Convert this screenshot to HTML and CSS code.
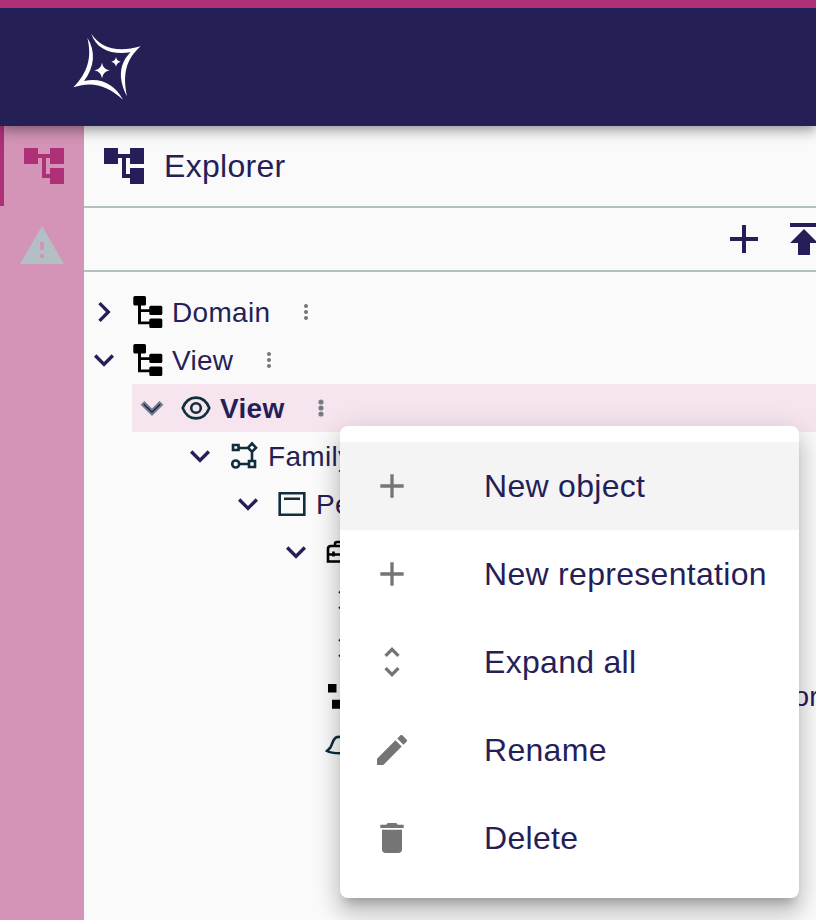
FILE: index.html
```html
<!DOCTYPE html>
<html lang="en">
<head>
<meta charset="utf-8">
<title>Explorer</title>
<link rel="stylesheet" href="styles.css">
</head>
<body>
<svg class="defs" aria-hidden="true">
  <symbol id="account-tree" viewBox="0 0 24 24"><path d="M22 11V3h-7v3H9V3H2v8h7V8h2v10h4v3h7v-8h-7v3h-2V8h2v3z"/></symbol>
  <symbol id="warning" viewBox="0 0 24 24"><path d="M1 21h22L12 2 1 21zm12-3h-2v-2h2v2zm0-4h-2v-4h2v4z"/></symbol>
  <symbol id="add" viewBox="0 0 24 24"><path d="M19 13h-6v6h-2v-6H5v-2h6V5h2v6h6v2z"/></symbol>
  <symbol id="publish" viewBox="0 0 24 24"><path d="M5 4v2h14V4H5zm0 10h4v6h6v-6h4l-7-7-7 7z"/></symbol>
  <symbol id="more" viewBox="0 0 24 24"><path d="M12 8c1.100 0 2-.9 2-2s-.9-2-2-2-2 .9-2 2 .9 2 2 2zm0 2c-1.100 0-2 .9-2 2s.9 2 2 2 2-.9 2-2-.9-2-2-2zm0 6c-1.100 0-2 .9-2 2s.9 2 2 2 2-.9 2-2-.9-2-2-2z"/></symbol>
  <symbol id="down" viewBox="0 0 24 24"><path d="M16.590 8.590 12 13.170 7.410 8.590 6 10l6 6 6-6z"/></symbol>
  <symbol id="right" viewBox="0 0 24 24"><path d="M10 6 8.590 7.410 13.170 12l-4.580 4.590L10 18l6-6z"/></symbol>
  <symbol id="unfold" viewBox="0 0 24 24"><path d="M12 5.830 15.170 9l1.410-1.410L12 3 7.410 7.590 8.830 9 12 5.830zm0 12.340L8.830 15l-1.410 1.410L12 21l4.590-4.590L15.170 15 12 18.170z"/></symbol>
  <symbol id="edit" viewBox="0 0 24 24"><path d="M3 17.250V21h3.750L17.810 9.940l-3.750-3.750L3 17.250zM20.710 7.040c.39-.39.39-1.020 0-1.410l-2.340-2.340c-.39-.39-1.020-.39-1.410 0l-1.830 1.830 3.750 3.750 1.830-1.830z"/></symbol>
  <symbol id="delete" viewBox="0 0 24 24"><path d="M6 19c0 1.100.9 2 2 2h8c1.100 0 2-.9 2-2V7H6v12zM19 4h-3.500l-1-1h-5l-1 1H5v2h14V4z"/></symbol>
  <symbol id="document" viewBox="0 0 32 32"><g><rect x="1.300" y="0" width="12.700" height="9.500" rx="1.500"/><rect x="17.300" y="9.800" width="13" height="9.200" rx="1.500"/><rect x="17.300" y="22.600" width="13" height="9.400" rx="1.500"/><path d="M6 8h3v5.200h9v2.700H9v9.600h9v2.700H6z"/></g></symbol>
</svg>

<header class="navbar">
  <svg class="logo" viewBox="0 0 300 270">
    <path d="M94 41C121 83 170 99 242 79C196 120 188 165 201 229C173 175 178 130 212 97C157 106 108 88 94 41Z"/>
    <path d="M82 53C107 92 105 140 72 183C125 172 164 194 189 239C143 197 97 182 40 202C82 158 97 115 82 53Z"/>
    <path d="M126 128Q129 147 149 151Q129 155 126 175Q123 155 103 151Q123 147 126 128ZM168 111Q170 123 182 125Q170 128 168 140Q166 128 154 125Q166 123 168 111Z"/>
  </svg>
</header>

<main class="workbench">
  <nav class="sidebar">
    <div class="tab active"><svg class="icon48"><use href="#account-tree"/></svg></div>
    <div class="tab"><svg class="icon48"><use href="#warning"/></svg></div>
  </nav>
  <section class="explorer">
    <div class="panel-title"><svg class="icon48"><use href="#account-tree"/></svg><h1>Explorer</h1></div>
    <div class="toolbar"><svg class="icon48"><use href="#add"/></svg><svg class="icon48"><use href="#publish"/></svg></div>
    <div class="tree">
      <div class="row"><svg class="toggle"><use href="#right"/></svg><svg class="kind"><use href="#document"/></svg><span class="label">Domain</span><svg class="more"><use href="#more"/></svg></div>
      <div class="row"><svg class="toggle"><use href="#down"/></svg><svg class="kind"><use href="#document"/></svg><span class="label">View</span><svg class="more"><use href="#more"/></svg></div>
      <div class="row level1 selected"><svg class="toggle"><use href="#down"/></svg>
        <svg class="kind outline" viewBox="0 0 32 32"><path d="M2.700 16C8 2.200 24 2.200 29.300 16C24 29.800 8 29.800 2.700 16Z"/><circle cx="16" cy="16" r="4.800"/></svg>
        <span class="label">View</span><svg class="more"><use href="#more"/></svg></div>
      <div class="row level2"><svg class="toggle"><use href="#down"/></svg>
        <svg class="kind outline" viewBox="0 0 32 32"><path d="M5 5h5.500v5H5zM21 21h6v6h-6zM24 3.500 28 7.700l-4 4.200-4-4.200zM10.500 8h10M24 12v9M11 24h10"/><circle cx="7.700" cy="24" r="3.500"/></svg>
        <span class="label">Family</span></div>
      <div class="row level3"><svg class="toggle"><use href="#down"/></svg>
        <svg class="kind outline" viewBox="0 0 32 32"><path d="M3.700 5.300h24.600v21.500H3.700zM8 10.700h16"/></svg>
        <span class="label">Person</span></div>
      <div class="row level4"><svg class="toggle"><use href="#down"/></svg>
        <svg class="kind tools" viewBox="0 0 32 32"><path d="M4 13q0-3 3-3h18q3 0 3 3v12.500H4zM11 10V8q0-2 2-2h7v4M4 18.500h24M9.500 15.500v5"/></svg>
        <span class="label">Tools</span></div>
      <div class="row level5"><svg class="toggle"><use href="#right"/></svg></div>
      <div class="row level5"><svg class="toggle"><use href="#right"/></svg></div>
      <div class="row level4 leaf">
        <svg class="kind" viewBox="0 0 32 32"><path d="M4 4h8.500v8.500H4zM8 19.700h9v9H8zM20 10h9v9h-9z"/></svg>
        <span class="label trailing">Representation Editor</span></div>
      <div class="row level4 leaf">
        <svg class="kind outline" viewBox="0 0 32 32"><path d="M16 9C8 8 9 17 6 20L3 23C8 26 23 26 29 23C24 20 25 9 16 9Z"/></svg></div>
    </div>
  </section>
</main>

<div class="menu">
  <div class="item hovered"><svg><use href="#add"/></svg><span>New object</span></div>
  <div class="item"><svg><use href="#add"/></svg><span>New representation</span></div>
  <div class="item"><svg><use href="#unfold"/></svg><span>Expand all</span></div>
  <div class="item"><svg><use href="#edit"/></svg><span>Rename</span></div>
  <div class="item"><svg><use href="#delete"/></svg><span>Delete</span></div>
</div>
</body>
</html>
```
FILE: styles.css
```css
* { box-sizing: border-box; }
body {
  margin: 0;
  height: 920px;
  overflow: hidden;
  display: flex;
  flex-direction: column;
  background: #fafafa;
  color: #261e58;
  font-family: "Liberation Sans", Helvetica, Arial, sans-serif;
}
svg { display: block; flex: none; fill: currentColor; }
.defs { position: absolute; width: 0; height: 0; }
.navbar {
  flex: none;
  position: relative;
  z-index: 1;
  height: 126px;
  padding: 12px 60px;
  border-top: 8px solid #ae3077;
  background: #241f55;
  color: #fff;
  box-shadow: 0 4px 8px -2px rgba(0,0,0,.2), 0 8px 10px rgba(0,0,0,.14), 0 2px 20px rgba(0,0,0,.12);
}
.logo { width: 100px; height: 90px; }
.workbench { flex: 1; display: flex; min-height: 0; }
.sidebar { flex: none; width: 84px; background: #d494b7; }
.tab {
  height: 80px;
  display: flex;
  align-items: center;
  justify-content: center;
  color: #b3bfc5;
}
.active { border-left: 4px solid #ae3077; color: #ae3077; }
.icon48 { width: 48px; height: 48px; }
.explorer { flex: 1; min-width: 0; overflow: hidden; }
.panel-title {
  height: 82px;
  padding-left: 16px;
  display: flex;
  align-items: center;
  gap: 16px;
  border-bottom: 2px solid #b4bfc2;
}
.panel-title h1 { margin: 0; font-size: 32px; font-weight: 400; line-height: 48px; letter-spacing: .3px; }
.toolbar {
  height: 64px;
  padding-left: 636px;
  display: flex;
  align-items: center;
  gap: 12px;
  border-bottom: 2px solid #b4bfc2;
}
.tree { padding-top: 16px; }
.row { height: 48px; display: flex; align-items: center; white-space: nowrap; }
.toggle { width: 40px; height: 40px; margin-right: 8px; }
.kind { width: 32px; height: 32px; margin-right: 8px; color: #000; }
.outline { fill: none; stroke: #0f2d3d; stroke-width: 2.600; }
.tools { fill: none; stroke: #000; stroke-width: 2.600; }
.label { padding-top: 2px; font-size: 28px; line-height: 40px; letter-spacing: .3px; }
.trailing { margin-left: auto; margin-right: -3px; }
.more { width: 24px; height: 24px; margin-left: 24px; color: #757575; }
.level1 { margin-left: 48px; }
.level2 { margin-left: 96px; }
.level3 { margin-left: 144px; }
.level4 { margin-left: 192px; }
.level5 { margin-left: 240px; }
.leaf { padding-left: 48px; }
.selected { background: #f6e5ee; }
.selected .label { font-weight: 700; }
.selected .toggle, .selected .more { stroke: #738087; stroke-width: 1.200; }
.menu {
  position: absolute;
  z-index: 2;
  left: 340px;
  top: 426px;
  width: 459px;
  height: 472px;
  padding: 16px 0;
  border-radius: 8px;
  background: #fff;
  box-shadow: 0 10px 10px -6px rgba(0,0,0,.2), 0 16px 20px 2px rgba(0,0,0,.14), 0 6px 28px 4px rgba(0,0,0,.12);
}
.item { height: 88px; padding-left: 32px; display: flex; align-items: center; gap: 72px; font-size: 32px; letter-spacing: .3px; white-space: nowrap; }
.item svg { width: 40px; height: 40px; color: #757575; }
.hovered { background: #f4f4f4; }
```
